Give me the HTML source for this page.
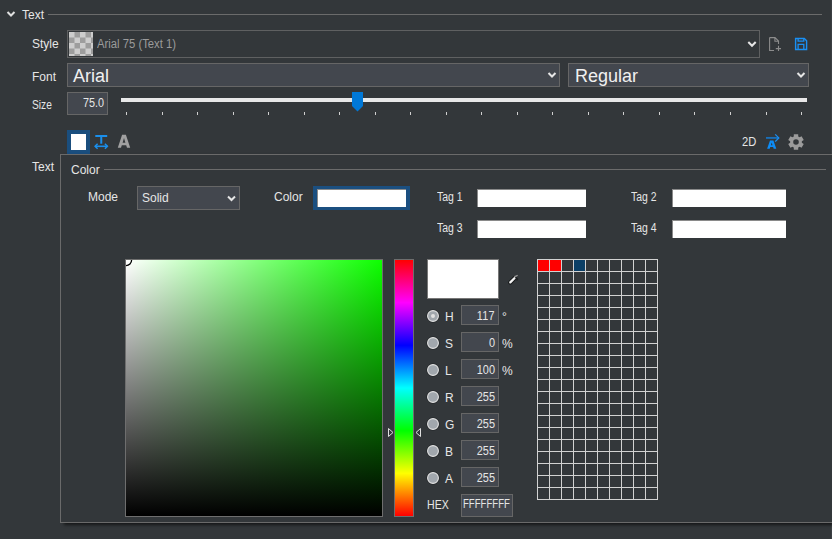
<!DOCTYPE html>
<html><head><meta charset="utf-8">
<style>
*{margin:0;padding:0;box-sizing:border-box}
html,body{width:832px;height:539px;overflow:hidden;background:#33373a}
body{position:relative;font-family:"Liberation Sans",sans-serif;font-size:12px;color:#e6e6e6}
.a{position:absolute}
.t{position:absolute;line-height:12px;white-space:nowrap}
.box{position:absolute;border:1px solid #666;background:#43474e}
.wbox{position:absolute;background:#fff;border-left:1px solid #8a8a8a;border-top:1px solid #8a8a8a}
svg{position:absolute;overflow:visible}
</style></head><body>

<!-- header -->
<svg style="left:0;top:0" width="832" height="539">
  <polyline points="7.5,12 11,15.5 14.5,12" fill="none" stroke="#e0e0e0" stroke-width="2"/>
  <rect x="48" y="14" width="774" height="1" fill="#6b6b6b"/>
  <rect x="831" y="0" width="1" height="539" fill="#3b3f43"/>
</svg>
<div class="t" style="left:22px;top:9px">Text</div>

<!-- Style row -->
<div class="t" style="left:32px;top:38px">Style</div>
<div class="a" style="left:67px;top:30px;width:693px;height:28px;border:1px solid #5f6061"></div>
<svg style="left:69px;top:32px;overflow:hidden" width="24" height="24"><rect width="24" height="24" fill="#cdcdcd"/><g fill="#9d9d9d"><rect x="5.5" y="0.0" width="5.5" height="5.5"/><rect x="16.5" y="0.0" width="5.5" height="5.5"/><rect x="0.0" y="5.5" width="5.5" height="5.5"/><rect x="11.0" y="5.5" width="5.5" height="5.5"/><rect x="22.0" y="5.5" width="5.5" height="5.5"/><rect x="5.5" y="11.0" width="5.5" height="5.5"/><rect x="16.5" y="11.0" width="5.5" height="5.5"/><rect x="0.0" y="16.5" width="5.5" height="5.5"/><rect x="11.0" y="16.5" width="5.5" height="5.5"/><rect x="22.0" y="16.5" width="5.5" height="5.5"/><rect x="5.5" y="22.0" width="5.5" height="5.5"/><rect x="16.5" y="22.0" width="5.5" height="5.5"/></g></svg>
<div class="t" style="left:97px;top:38px;color:#9b9b9b;transform:scaleX(0.94);transform-origin:0 0">Arial 75 (Text 1)</div>
<svg style="left:0;top:0" width="832" height="100">
  <polyline points="748.3,42 752,45.8 755.7,42" fill="none" stroke="#e6e6e6" stroke-width="2"/>
</svg>
<!-- new doc icon -->
<svg style="left:0;top:0" width="832" height="60">
  <path d="M769.6,37.6 H775 L778.5,41.1 V44 M774.9,37.6 V41.2 H778.5 M769.6,37.6 V50.5 H774" fill="none" stroke="#8c8c8c" stroke-width="1.1"/>
  <path d="M778.5,45.8 V51 M775.8,48.6 H781" fill="none" stroke="#8c8c8c" stroke-width="1.1"/>
</svg>
<!-- save icon -->
<svg style="left:0;top:0" width="832" height="60">
  <path d="M795.6,38.5 H804.3 L806.6,40.8 V49.5 H795.6 Z" fill="none" stroke="#1a90f4" stroke-width="1.4"/>
  <path d="M798.1,38.5 V41.2 H803.8 V38.5 M798.1,49.5 V44.3 H803.8 V49.5" fill="none" stroke="#1a90f4" stroke-width="1.3"/>
</svg>

<!-- Font row -->
<div class="t" style="left:32px;top:71px">Font</div>
<div class="box" style="left:67px;top:63px;width:493px;height:24px"></div>
<div class="t" style="left:73px;top:67px;font-size:18px;line-height:18px;color:#f0f0f0">Arial</div>
<div class="box" style="left:568px;top:63px;width:241px;height:24px"></div>
<div class="t" style="left:575px;top:67px;font-size:18px;line-height:18px;color:#f0f0f0">Regular</div>
<svg style="left:0;top:0" width="832" height="100">
  <polyline points="548.5,73 552,76.5 555.5,73" fill="none" stroke="#e6e6e6" stroke-width="2"/>
  <polyline points="797.5,73 801,76.5 804.5,73" fill="none" stroke="#e6e6e6" stroke-width="2"/>
</svg>

<!-- Size row -->
<div class="t" style="left:32px;top:99px;transform:scaleX(0.85);transform-origin:0 0">Size</div>
<div class="box" style="left:67px;top:92px;width:41px;height:23px"></div>
<div class="t" style="left:67px;top:97px;width:37px;text-align:right;transform:scaleX(0.9);transform-origin:100% 0">75.0</div>
<div class="a" style="left:121px;top:98px;width:686px;height:4px;background:#e8e8e8"></div>
<svg style="left:352px;top:92px" width="11" height="20" viewBox="0 0 11 20">
  <path d="M0,0 H11 V14 L5.5,19.5 L0,14 Z" fill="#0078d7"/>
</svg>
<svg id="ticks" style="left:0;top:0" width="832" height="130"><rect x="126" y="112" width="1" height="3" fill="#d0d0d0"/><rect x="162" y="112" width="1" height="3" fill="#d0d0d0"/><rect x="197" y="112" width="1" height="3" fill="#d0d0d0"/><rect x="233" y="112" width="1" height="3" fill="#d0d0d0"/><rect x="268" y="112" width="1" height="3" fill="#d0d0d0"/><rect x="304" y="112" width="1" height="3" fill="#d0d0d0"/><rect x="339" y="112" width="1" height="3" fill="#d0d0d0"/><rect x="375" y="112" width="1" height="3" fill="#d0d0d0"/><rect x="410" y="112" width="1" height="3" fill="#d0d0d0"/><rect x="446" y="112" width="1" height="3" fill="#d0d0d0"/><rect x="481" y="112" width="1" height="3" fill="#d0d0d0"/><rect x="517" y="112" width="1" height="3" fill="#d0d0d0"/><rect x="552" y="112" width="1" height="3" fill="#d0d0d0"/><rect x="588" y="112" width="1" height="3" fill="#d0d0d0"/><rect x="623" y="112" width="1" height="3" fill="#d0d0d0"/><rect x="659" y="112" width="1" height="3" fill="#d0d0d0"/><rect x="694" y="112" width="1" height="3" fill="#d0d0d0"/><rect x="730" y="112" width="1" height="3" fill="#d0d0d0"/><rect x="766" y="112" width="1" height="3" fill="#d0d0d0"/><rect x="801" y="112" width="1" height="3" fill="#d0d0d0"/></svg>

<!-- toolbar -->
<div class="a" style="left:67px;top:130px;width:23px;height:24px;background:#1a4e7e"></div>
<div class="a" style="left:71px;top:134px;width:15px;height:16px;background:#fff"></div>
<svg style="left:94px;top:134px" width="15" height="16" viewBox="0 0 15 16">
  <path d="M1.3,2 H13.2 M7.25,2 V9.8" fill="none" stroke="#1a8fec" stroke-width="2"/>
  <path d="M1,12.3 H13.5" fill="none" stroke="#1a8fec" stroke-width="1.6"/>
  <path d="M3.6,9.8 L1.1,12.3 L3.6,14.8 M10.9,9.8 L13.4,12.3 L10.9,14.8" fill="none" stroke="#1a8fec" stroke-width="1.5"/>
</svg>
<svg style="left:117px;top:134px" width="14" height="15" viewBox="0 0 14 15"><path fill="#a0a0a0" fill-rule="evenodd" d="M5.1,0.8 H8.9 L13.2,13.7 H10 L9.2,11.2 H4.8 L4,13.7 H0.8 Z M7,4 L5.6,8.7 H8.4 Z"/></svg>
<div class="t" style="left:742px;top:136px;transform:scaleX(0.93);transform-origin:0 0">2D</div>
<svg style="left:0;top:0" width="832" height="160">
  <path d="M766,137.9 H778.5" fill="none" stroke="#1a6fb8" stroke-width="1.9"/>
  <path d="M775.2,134.4 L778.8,137.9 L775.2,141.6" fill="none" stroke="#1a8ef2" stroke-width="1.3"/>
  <path fill="#0d8cf6" fill-rule="evenodd" d="M770,140.4 H773.4 L776.3,148.8 H773.7 L773.1,146.9 H770.3 L769.7,148.8 H767.1 Z M771.7,142.6 L770.9,145.2 H772.5 Z"/>
</svg>
<svg style="left:788px;top:134px" width="16" height="16" viewBox="0 0 16 16">
  <path fill="#9b9b9b" fill-rule="evenodd" d="M5.80,2.53 L5.80,0.31 L10.20,0.31 L10.20,2.53 L11.64,3.36 L13.56,2.25 L15.76,6.06 L13.84,7.17 L13.84,8.83 L15.76,9.94 L13.56,13.75 L11.64,12.64 L10.20,13.47 L10.20,15.69 L5.80,15.69 L5.80,13.47 L4.36,12.64 L2.44,13.75 L0.24,9.94 L2.16,8.83 L2.16,7.17 L0.24,6.06 L2.44,2.25 L4.36,3.36 Z M8,5.2 A2.8,2.8 0 1 0 8,10.8 A2.8,2.8 0 1 0 8,5.2 Z"/>
</svg>

<div class="t" style="left:32px;top:161px">Text</div>

<!-- panel -->
<div class="a" style="left:60px;top:154px;width:780px;height:369px;border:1px solid #6a6a6a;background:#33373a;box-shadow:4px 2px 3px rgba(0,0,0,0.6)"></div>
<div class="t" style="left:71px;top:164px">Color</div>
<div class="a" style="left:104px;top:169px;width:722px;height:1px;background:#6b6b6b"></div>

<div class="t" style="left:88px;top:191px">Mode</div>
<div class="box" style="left:137px;top:186px;width:103px;height:24px"></div>
<div class="t" style="left:142px;top:192px">Solid</div>
<svg style="left:0;top:0" width="832" height="300">
  <polyline points="228,196.5 231.5,200 235,196.5" fill="none" stroke="#e6e6e6" stroke-width="2"/>
</svg>

<div class="t" style="left:274px;top:191px">Color</div>
<div class="a" style="left:313px;top:186px;width:97px;height:24px;background:#1b4f80"></div>
<div class="wbox" style="left:317px;top:189px;width:89px;height:18px"></div>

<div class="t" style="left:437px;top:191px;transform:scaleX(0.87);transform-origin:0 0">Tag 1</div>
<div class="wbox" style="left:477px;top:189px;width:109px;height:18px"></div>
<div class="t" style="left:631px;top:191px;transform:scaleX(0.87);transform-origin:0 0">Tag 2</div>
<div class="wbox" style="left:672px;top:189px;width:114px;height:18px"></div>
<div class="t" style="left:437px;top:222px;transform:scaleX(0.87);transform-origin:0 0">Tag 3</div>
<div class="wbox" style="left:477px;top:220px;width:109px;height:18px"></div>
<div class="t" style="left:631px;top:222px;transform:scaleX(0.87);transform-origin:0 0">Tag 4</div>
<div class="wbox" style="left:672px;top:220px;width:114px;height:18px"></div>

<!-- SV square -->
<div class="a" style="left:125px;top:259px;width:258px;height:258px;border:1px solid #6e6e6e;background:linear-gradient(to top,#000,rgba(0,0,0,0)),linear-gradient(to right,#fff,rgb(13,255,0))"></div>
<svg style="left:126px;top:260px" width="10" height="10" viewBox="0 0 10 10">
  <path d="M0,5.6 A5.6,5.6 0 0 0 5.6,0" fill="none" stroke="#000" stroke-width="1.3"/>
</svg>
<!-- hue -->
<div class="a" style="left:394px;top:259px;width:20px;height:258px;border:1px solid #6e6e6e;background:linear-gradient(to top,#f00 0%,#ff0 16.67%,#0f0 33.33%,#0ff 50%,#00f 66.67%,#f0f 83.33%,#f00 100%)"></div>
<svg style="left:0;top:0" width="832" height="539">
  <path d="M388.5,428.5 L393,432.5 L388.5,436.5 Z" fill="none" stroke="#e0e0e0" stroke-width="1"/>
  <path d="M420.5,428.5 L416,432.5 L420.5,436.5 Z" fill="none" stroke="#e0e0e0" stroke-width="1"/>
</svg>

<!-- preview -->
<div class="a" style="left:427px;top:259px;width:72px;height:40px;background:#fff;border:1px solid #777"></div>
<svg style="left:0;top:0" width="832" height="300">
  <path d="M510.3,282.4 L514.6,278.1" stroke="#161819" stroke-width="4.2" stroke-linecap="round"/>
  <path d="M515,277.6 L517,279.2" stroke="#1e2022" stroke-width="2.5" stroke-linecap="round"/>
  <path d="M510.3,282.4 L514.4,278.3" stroke="#f2f2f2" stroke-width="2.3" stroke-linecap="round"/>
  <path d="M514.3,276.3 Q515.5,276.9 517.6,275.2" fill="none" stroke="#9a9a9a" stroke-width="1.2"/>
</svg>

<div id="rows"><svg style="left:427px;top:310px" width="12" height="12" viewBox="0 0 12 12"><circle cx="6" cy="6" r="6.2" fill="none" stroke="#202326" stroke-width="0.8"/><circle cx="6" cy="6" r="5.4" fill="#a1a7ad" stroke="#e2e2e2" stroke-width="1.1"/><circle cx="6" cy="6" r="2" fill="#e0e0e0"/></svg><div class="t" style="left:445px;top:311px">H</div><div class="box" style="left:461px;top:305px;width:38px;height:20px"></div><div class="t" style="left:461px;top:310px;width:34px;text-align:right;letter-spacing:0.4px;transform:scaleX(0.9);transform-origin:100% 0">117</div><div class="t" style="left:502px;top:311px">°</div><svg style="left:427px;top:337px" width="12" height="12" viewBox="0 0 12 12"><circle cx="6" cy="6" r="6.2" fill="none" stroke="#202326" stroke-width="0.8"/><circle cx="6" cy="6" r="5.4" fill="#a1a7ad" stroke="#e2e2e2" stroke-width="1.1"/></svg><div class="t" style="left:445px;top:338px">S</div><div class="box" style="left:461px;top:332px;width:38px;height:20px"></div><div class="t" style="left:461px;top:337px;width:34px;text-align:right;transform:scaleX(0.91);transform-origin:100% 0">0</div><div class="t" style="left:502px;top:338px">%</div><svg style="left:427px;top:364px" width="12" height="12" viewBox="0 0 12 12"><circle cx="6" cy="6" r="6.2" fill="none" stroke="#202326" stroke-width="0.8"/><circle cx="6" cy="6" r="5.4" fill="#a1a7ad" stroke="#e2e2e2" stroke-width="1.1"/></svg><div class="t" style="left:445px;top:365px">L</div><div class="box" style="left:461px;top:359px;width:38px;height:20px"></div><div class="t" style="left:461px;top:364px;width:34px;text-align:right;transform:scaleX(0.91);transform-origin:100% 0">100</div><div class="t" style="left:502px;top:365px">%</div><svg style="left:427px;top:391px" width="12" height="12" viewBox="0 0 12 12"><circle cx="6" cy="6" r="6.2" fill="none" stroke="#202326" stroke-width="0.8"/><circle cx="6" cy="6" r="5.4" fill="#a1a7ad" stroke="#e2e2e2" stroke-width="1.1"/></svg><div class="t" style="left:445px;top:392px">R</div><div class="box" style="left:461px;top:386px;width:38px;height:20px"></div><div class="t" style="left:461px;top:391px;width:34px;text-align:right;transform:scaleX(0.91);transform-origin:100% 0">255</div><svg style="left:427px;top:418px" width="12" height="12" viewBox="0 0 12 12"><circle cx="6" cy="6" r="6.2" fill="none" stroke="#202326" stroke-width="0.8"/><circle cx="6" cy="6" r="5.4" fill="#a1a7ad" stroke="#e2e2e2" stroke-width="1.1"/></svg><div class="t" style="left:445px;top:419px">G</div><div class="box" style="left:461px;top:413px;width:38px;height:20px"></div><div class="t" style="left:461px;top:418px;width:34px;text-align:right;transform:scaleX(0.91);transform-origin:100% 0">255</div><svg style="left:427px;top:445px" width="12" height="12" viewBox="0 0 12 12"><circle cx="6" cy="6" r="6.2" fill="none" stroke="#202326" stroke-width="0.8"/><circle cx="6" cy="6" r="5.4" fill="#a1a7ad" stroke="#e2e2e2" stroke-width="1.1"/></svg><div class="t" style="left:445px;top:446px">B</div><div class="box" style="left:461px;top:440px;width:38px;height:20px"></div><div class="t" style="left:461px;top:445px;width:34px;text-align:right;transform:scaleX(0.91);transform-origin:100% 0">255</div><svg style="left:427px;top:472px" width="12" height="12" viewBox="0 0 12 12"><circle cx="6" cy="6" r="6.2" fill="none" stroke="#202326" stroke-width="0.8"/><circle cx="6" cy="6" r="5.4" fill="#a1a7ad" stroke="#e2e2e2" stroke-width="1.1"/></svg><div class="t" style="left:445px;top:473px">A</div><div class="box" style="left:461px;top:467px;width:38px;height:20px"></div><div class="t" style="left:461px;top:472px;width:34px;text-align:right;transform:scaleX(0.91);transform-origin:100% 0">255</div></div>
<div class="t" style="left:427px;top:499px;transform:scaleX(0.88);transform-origin:0 0">HEX</div>
<div class="box" style="left:461px;top:494px;width:52px;height:23px"></div>
<div class="t" style="left:463px;top:498px;transform:scaleX(0.8);transform-origin:0 0">FFFFFFFF</div>

<!-- palette grid -->
<svg id="grid" style="left:537px;top:259px" width="121" height="241"><rect width="121" height="241" fill="#d2d2d2"/><rect x="1" y="1" width="11" height="11" fill="#ff0000"/><rect x="13" y="1" width="11" height="11" fill="#ff0000"/><rect x="25" y="1" width="11" height="11" fill="#33373a"/><rect x="37" y="1" width="11" height="11" fill="#0b3f66"/><rect x="49" y="1" width="11" height="11" fill="#33373a"/><rect x="61" y="1" width="11" height="11" fill="#33373a"/><rect x="73" y="1" width="11" height="11" fill="#33373a"/><rect x="85" y="1" width="11" height="11" fill="#33373a"/><rect x="97" y="1" width="11" height="11" fill="#33373a"/><rect x="109" y="1" width="11" height="11" fill="#33373a"/><rect x="1" y="13" width="11" height="11" fill="#33373a"/><rect x="13" y="13" width="11" height="11" fill="#33373a"/><rect x="25" y="13" width="11" height="11" fill="#33373a"/><rect x="37" y="13" width="11" height="11" fill="#33373a"/><rect x="49" y="13" width="11" height="11" fill="#33373a"/><rect x="61" y="13" width="11" height="11" fill="#33373a"/><rect x="73" y="13" width="11" height="11" fill="#33373a"/><rect x="85" y="13" width="11" height="11" fill="#33373a"/><rect x="97" y="13" width="11" height="11" fill="#33373a"/><rect x="109" y="13" width="11" height="11" fill="#33373a"/><rect x="1" y="25" width="11" height="11" fill="#33373a"/><rect x="13" y="25" width="11" height="11" fill="#33373a"/><rect x="25" y="25" width="11" height="11" fill="#33373a"/><rect x="37" y="25" width="11" height="11" fill="#33373a"/><rect x="49" y="25" width="11" height="11" fill="#33373a"/><rect x="61" y="25" width="11" height="11" fill="#33373a"/><rect x="73" y="25" width="11" height="11" fill="#33373a"/><rect x="85" y="25" width="11" height="11" fill="#33373a"/><rect x="97" y="25" width="11" height="11" fill="#33373a"/><rect x="109" y="25" width="11" height="11" fill="#33373a"/><rect x="1" y="37" width="11" height="11" fill="#33373a"/><rect x="13" y="37" width="11" height="11" fill="#33373a"/><rect x="25" y="37" width="11" height="11" fill="#33373a"/><rect x="37" y="37" width="11" height="11" fill="#33373a"/><rect x="49" y="37" width="11" height="11" fill="#33373a"/><rect x="61" y="37" width="11" height="11" fill="#33373a"/><rect x="73" y="37" width="11" height="11" fill="#33373a"/><rect x="85" y="37" width="11" height="11" fill="#33373a"/><rect x="97" y="37" width="11" height="11" fill="#33373a"/><rect x="109" y="37" width="11" height="11" fill="#33373a"/><rect x="1" y="49" width="11" height="11" fill="#33373a"/><rect x="13" y="49" width="11" height="11" fill="#33373a"/><rect x="25" y="49" width="11" height="11" fill="#33373a"/><rect x="37" y="49" width="11" height="11" fill="#33373a"/><rect x="49" y="49" width="11" height="11" fill="#33373a"/><rect x="61" y="49" width="11" height="11" fill="#33373a"/><rect x="73" y="49" width="11" height="11" fill="#33373a"/><rect x="85" y="49" width="11" height="11" fill="#33373a"/><rect x="97" y="49" width="11" height="11" fill="#33373a"/><rect x="109" y="49" width="11" height="11" fill="#33373a"/><rect x="1" y="61" width="11" height="11" fill="#33373a"/><rect x="13" y="61" width="11" height="11" fill="#33373a"/><rect x="25" y="61" width="11" height="11" fill="#33373a"/><rect x="37" y="61" width="11" height="11" fill="#33373a"/><rect x="49" y="61" width="11" height="11" fill="#33373a"/><rect x="61" y="61" width="11" height="11" fill="#33373a"/><rect x="73" y="61" width="11" height="11" fill="#33373a"/><rect x="85" y="61" width="11" height="11" fill="#33373a"/><rect x="97" y="61" width="11" height="11" fill="#33373a"/><rect x="109" y="61" width="11" height="11" fill="#33373a"/><rect x="1" y="73" width="11" height="11" fill="#33373a"/><rect x="13" y="73" width="11" height="11" fill="#33373a"/><rect x="25" y="73" width="11" height="11" fill="#33373a"/><rect x="37" y="73" width="11" height="11" fill="#33373a"/><rect x="49" y="73" width="11" height="11" fill="#33373a"/><rect x="61" y="73" width="11" height="11" fill="#33373a"/><rect x="73" y="73" width="11" height="11" fill="#33373a"/><rect x="85" y="73" width="11" height="11" fill="#33373a"/><rect x="97" y="73" width="11" height="11" fill="#33373a"/><rect x="109" y="73" width="11" height="11" fill="#33373a"/><rect x="1" y="85" width="11" height="11" fill="#33373a"/><rect x="13" y="85" width="11" height="11" fill="#33373a"/><rect x="25" y="85" width="11" height="11" fill="#33373a"/><rect x="37" y="85" width="11" height="11" fill="#33373a"/><rect x="49" y="85" width="11" height="11" fill="#33373a"/><rect x="61" y="85" width="11" height="11" fill="#33373a"/><rect x="73" y="85" width="11" height="11" fill="#33373a"/><rect x="85" y="85" width="11" height="11" fill="#33373a"/><rect x="97" y="85" width="11" height="11" fill="#33373a"/><rect x="109" y="85" width="11" height="11" fill="#33373a"/><rect x="1" y="97" width="11" height="11" fill="#33373a"/><rect x="13" y="97" width="11" height="11" fill="#33373a"/><rect x="25" y="97" width="11" height="11" fill="#33373a"/><rect x="37" y="97" width="11" height="11" fill="#33373a"/><rect x="49" y="97" width="11" height="11" fill="#33373a"/><rect x="61" y="97" width="11" height="11" fill="#33373a"/><rect x="73" y="97" width="11" height="11" fill="#33373a"/><rect x="85" y="97" width="11" height="11" fill="#33373a"/><rect x="97" y="97" width="11" height="11" fill="#33373a"/><rect x="109" y="97" width="11" height="11" fill="#33373a"/><rect x="1" y="109" width="11" height="11" fill="#33373a"/><rect x="13" y="109" width="11" height="11" fill="#33373a"/><rect x="25" y="109" width="11" height="11" fill="#33373a"/><rect x="37" y="109" width="11" height="11" fill="#33373a"/><rect x="49" y="109" width="11" height="11" fill="#33373a"/><rect x="61" y="109" width="11" height="11" fill="#33373a"/><rect x="73" y="109" width="11" height="11" fill="#33373a"/><rect x="85" y="109" width="11" height="11" fill="#33373a"/><rect x="97" y="109" width="11" height="11" fill="#33373a"/><rect x="109" y="109" width="11" height="11" fill="#33373a"/><rect x="1" y="121" width="11" height="11" fill="#33373a"/><rect x="13" y="121" width="11" height="11" fill="#33373a"/><rect x="25" y="121" width="11" height="11" fill="#33373a"/><rect x="37" y="121" width="11" height="11" fill="#33373a"/><rect x="49" y="121" width="11" height="11" fill="#33373a"/><rect x="61" y="121" width="11" height="11" fill="#33373a"/><rect x="73" y="121" width="11" height="11" fill="#33373a"/><rect x="85" y="121" width="11" height="11" fill="#33373a"/><rect x="97" y="121" width="11" height="11" fill="#33373a"/><rect x="109" y="121" width="11" height="11" fill="#33373a"/><rect x="1" y="133" width="11" height="11" fill="#33373a"/><rect x="13" y="133" width="11" height="11" fill="#33373a"/><rect x="25" y="133" width="11" height="11" fill="#33373a"/><rect x="37" y="133" width="11" height="11" fill="#33373a"/><rect x="49" y="133" width="11" height="11" fill="#33373a"/><rect x="61" y="133" width="11" height="11" fill="#33373a"/><rect x="73" y="133" width="11" height="11" fill="#33373a"/><rect x="85" y="133" width="11" height="11" fill="#33373a"/><rect x="97" y="133" width="11" height="11" fill="#33373a"/><rect x="109" y="133" width="11" height="11" fill="#33373a"/><rect x="1" y="145" width="11" height="11" fill="#33373a"/><rect x="13" y="145" width="11" height="11" fill="#33373a"/><rect x="25" y="145" width="11" height="11" fill="#33373a"/><rect x="37" y="145" width="11" height="11" fill="#33373a"/><rect x="49" y="145" width="11" height="11" fill="#33373a"/><rect x="61" y="145" width="11" height="11" fill="#33373a"/><rect x="73" y="145" width="11" height="11" fill="#33373a"/><rect x="85" y="145" width="11" height="11" fill="#33373a"/><rect x="97" y="145" width="11" height="11" fill="#33373a"/><rect x="109" y="145" width="11" height="11" fill="#33373a"/><rect x="1" y="157" width="11" height="11" fill="#33373a"/><rect x="13" y="157" width="11" height="11" fill="#33373a"/><rect x="25" y="157" width="11" height="11" fill="#33373a"/><rect x="37" y="157" width="11" height="11" fill="#33373a"/><rect x="49" y="157" width="11" height="11" fill="#33373a"/><rect x="61" y="157" width="11" height="11" fill="#33373a"/><rect x="73" y="157" width="11" height="11" fill="#33373a"/><rect x="85" y="157" width="11" height="11" fill="#33373a"/><rect x="97" y="157" width="11" height="11" fill="#33373a"/><rect x="109" y="157" width="11" height="11" fill="#33373a"/><rect x="1" y="169" width="11" height="11" fill="#33373a"/><rect x="13" y="169" width="11" height="11" fill="#33373a"/><rect x="25" y="169" width="11" height="11" fill="#33373a"/><rect x="37" y="169" width="11" height="11" fill="#33373a"/><rect x="49" y="169" width="11" height="11" fill="#33373a"/><rect x="61" y="169" width="11" height="11" fill="#33373a"/><rect x="73" y="169" width="11" height="11" fill="#33373a"/><rect x="85" y="169" width="11" height="11" fill="#33373a"/><rect x="97" y="169" width="11" height="11" fill="#33373a"/><rect x="109" y="169" width="11" height="11" fill="#33373a"/><rect x="1" y="181" width="11" height="11" fill="#33373a"/><rect x="13" y="181" width="11" height="11" fill="#33373a"/><rect x="25" y="181" width="11" height="11" fill="#33373a"/><rect x="37" y="181" width="11" height="11" fill="#33373a"/><rect x="49" y="181" width="11" height="11" fill="#33373a"/><rect x="61" y="181" width="11" height="11" fill="#33373a"/><rect x="73" y="181" width="11" height="11" fill="#33373a"/><rect x="85" y="181" width="11" height="11" fill="#33373a"/><rect x="97" y="181" width="11" height="11" fill="#33373a"/><rect x="109" y="181" width="11" height="11" fill="#33373a"/><rect x="1" y="193" width="11" height="11" fill="#33373a"/><rect x="13" y="193" width="11" height="11" fill="#33373a"/><rect x="25" y="193" width="11" height="11" fill="#33373a"/><rect x="37" y="193" width="11" height="11" fill="#33373a"/><rect x="49" y="193" width="11" height="11" fill="#33373a"/><rect x="61" y="193" width="11" height="11" fill="#33373a"/><rect x="73" y="193" width="11" height="11" fill="#33373a"/><rect x="85" y="193" width="11" height="11" fill="#33373a"/><rect x="97" y="193" width="11" height="11" fill="#33373a"/><rect x="109" y="193" width="11" height="11" fill="#33373a"/><rect x="1" y="205" width="11" height="11" fill="#33373a"/><rect x="13" y="205" width="11" height="11" fill="#33373a"/><rect x="25" y="205" width="11" height="11" fill="#33373a"/><rect x="37" y="205" width="11" height="11" fill="#33373a"/><rect x="49" y="205" width="11" height="11" fill="#33373a"/><rect x="61" y="205" width="11" height="11" fill="#33373a"/><rect x="73" y="205" width="11" height="11" fill="#33373a"/><rect x="85" y="205" width="11" height="11" fill="#33373a"/><rect x="97" y="205" width="11" height="11" fill="#33373a"/><rect x="109" y="205" width="11" height="11" fill="#33373a"/><rect x="1" y="217" width="11" height="11" fill="#33373a"/><rect x="13" y="217" width="11" height="11" fill="#33373a"/><rect x="25" y="217" width="11" height="11" fill="#33373a"/><rect x="37" y="217" width="11" height="11" fill="#33373a"/><rect x="49" y="217" width="11" height="11" fill="#33373a"/><rect x="61" y="217" width="11" height="11" fill="#33373a"/><rect x="73" y="217" width="11" height="11" fill="#33373a"/><rect x="85" y="217" width="11" height="11" fill="#33373a"/><rect x="97" y="217" width="11" height="11" fill="#33373a"/><rect x="109" y="217" width="11" height="11" fill="#33373a"/><rect x="1" y="229" width="11" height="11" fill="#33373a"/><rect x="13" y="229" width="11" height="11" fill="#33373a"/><rect x="25" y="229" width="11" height="11" fill="#33373a"/><rect x="37" y="229" width="11" height="11" fill="#33373a"/><rect x="49" y="229" width="11" height="11" fill="#33373a"/><rect x="61" y="229" width="11" height="11" fill="#33373a"/><rect x="73" y="229" width="11" height="11" fill="#33373a"/><rect x="85" y="229" width="11" height="11" fill="#33373a"/><rect x="97" y="229" width="11" height="11" fill="#33373a"/><rect x="109" y="229" width="11" height="11" fill="#33373a"/></svg>

</body></html>
